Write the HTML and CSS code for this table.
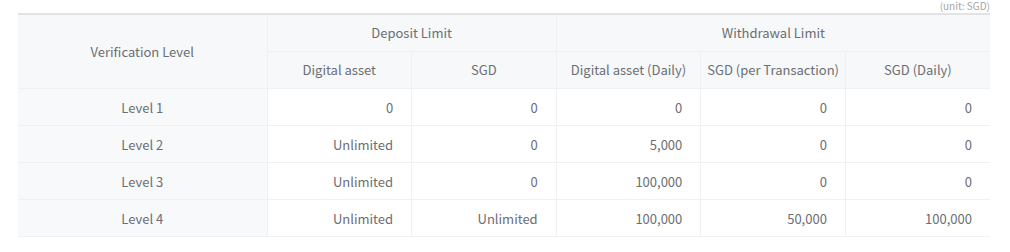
FILE: index.html
```html
<!DOCTYPE html>
<html>
<head>
<meta charset="utf-8">
<link rel="stylesheet" href="styles.css">
</head>
<body>
<div class="wrap">
  <div class="unit">(unit: SGD)</div>
  <table class="limits">
    <colgroup>
      <col class="c-level"><col class="c-n"><col class="c-n"><col class="c-n"><col class="c-n"><col class="c-n">
    </colgroup>
    <thead>
      <tr>
        <th rowspan="2" class="lvl-head">Verification Level</th>
        <th colspan="2">Deposit Limit</th>
        <th colspan="3">Withdrawal Limit</th>
      </tr>
      <tr>
        <th>Digital asset</th>
        <th>SGD</th>
        <th>Digital asset (Daily)</th>
        <th>SGD (per Transaction)</th>
        <th>SGD (Daily)</th>
      </tr>
    </thead>
    <tbody>
      <tr><td class="lvl">Level 1</td><td>0</td><td>0</td><td>0</td><td>0</td><td>0</td></tr>
      <tr><td class="lvl">Level 2</td><td>Unlimited</td><td>0</td><td>5,000</td><td>0</td><td>0</td></tr>
      <tr><td class="lvl">Level 3</td><td>Unlimited</td><td>0</td><td>100,000</td><td>0</td><td>0</td></tr>
      <tr><td class="lvl">Level 4</td><td>Unlimited</td><td>Unlimited</td><td>100,000</td><td>50,000</td><td>100,000</td></tr>
    </tbody>
  </table>
</div>
</body>
</html>
```
FILE: styles.css
```css
html, body {
  margin: 0;
  padding: 0;
  background: #ffffff;
}
body {
  font-family: "Noto Sans CJK KR", "Noto Sans", sans-serif;
  font-size: 13px;
  color: #6b6e73;
}
.wrap {
  padding: 13px 20px 0 18px;
  position: relative;
}
.unit {
  position: absolute;
  right: 20px;
  top: 0;
  font-size: 10px;
  line-height: 11px;
  color: #a3a6aa;
}
.limits {
  width: 972px;
  border-collapse: collapse;
  table-layout: fixed;
  border-top: 2px solid #e1e3e7;
}
.c-level { width: 249px; }
.c-n { width: 144.6px; }
.limits th, .limits td {
  border: 1px solid #eef0f3;
  height: 36px;
  padding: 0 18px;
  font-weight: 400;
  line-height: 18px;
  white-space: nowrap;
}
.limits th {
  padding: 0 4px;
  background: #f6f8fa;
  text-align: center;
}
.limits tr > :first-child { border-left: none; }
.limits tr > :last-child { border-right: none; }
.limits td {
  height: 34px;
  padding-top: 2px;
  text-align: right;
  background: #ffffff;
}
.limits td.lvl {
  text-align: center;
  background: #f8f9fb;
}
```
